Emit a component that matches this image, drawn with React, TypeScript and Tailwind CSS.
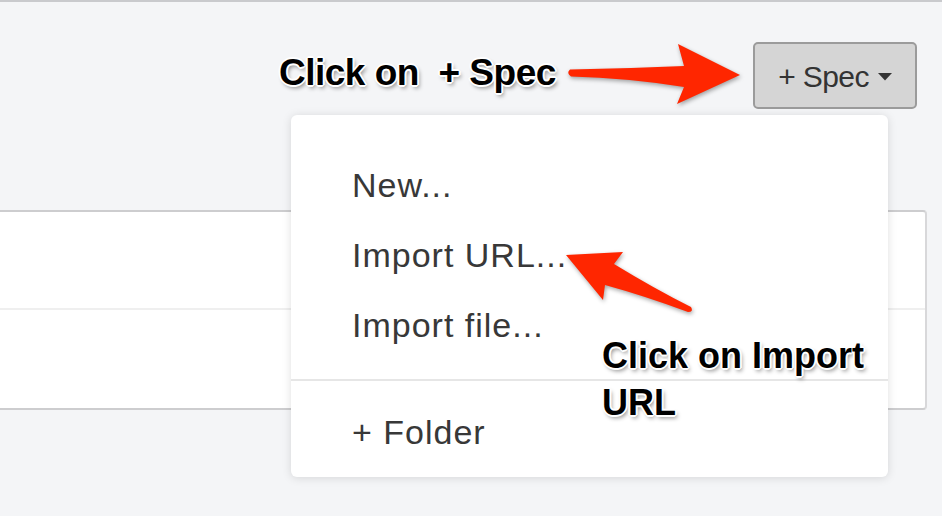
const outline =
  "[text-shadow:0_0_2px_#fff,1px_1px_0_#fff,-1px_-1px_0_#fff,1px_-1px_0_#fff,-1px_1px_0_#fff,2px_0_0_#fff,-2px_0_0_#fff,0_2px_0_#fff,0_-2px_0_#fff,2px_3px_4px_rgba(0,0,0,0.45)]";

const menuItems = ["New...", "Import URL...", "Import file..."];

const App = () => {
  return (
    <div className="relative w-[942px] h-[516px] overflow-hidden bg-[#f4f5f7] font-['Liberation_Sans',Arial,sans-serif]">
      <div className="h-[2px] bg-[#c9cacd]" />

      {/* toolbar */}
      <div className="flex justify-end pt-[40px] pr-[25px]">
        <div className="relative">
          <button className="flex items-center justify-center gap-[9px] w-[164px] h-[67px] pt-[2px] rounded-[5px] border-2 border-[#9b9b9b] bg-[#d5d5d5] text-[30px] tracking-[-0.6px] text-[#333]">
            <span>+ Spec</span>
            <svg width="14" height="8" viewBox="0 0 14 8" className="mt-[1px]">
              <path d="M0 0 H14 L7 7.5 Z" fill="#333" />
            </svg>
          </button>

          {/* dropdown */}
          <div className="absolute z-10 right-[29px] top-[calc(100%+6px)] w-[597px] rounded-[6px] bg-white shadow-[0_1px_10px_rgba(0,0,0,0.13)] pt-[35px] pb-[10px]">
            {menuItems.map((label) => (
              <div key={label} className="h-[70px] leading-[70px] pl-[61px] text-[34px] tracking-[1px] text-[#383838]">
                {label}
              </div>
            ))}
            <div className="mt-[19px] h-[2px] bg-[#e6e6e6]" />
            <div className="mt-[16px] h-[70px] leading-[70px] pl-[61px] text-[34px] tracking-[1px] text-[#383838]">
              + Folder
            </div>
          </div>
        </div>
      </div>

      {/* list behind the menu */}
      <div className="mt-[101px] mr-[15px] bg-white border-y-2 border-r-2 border-y-[#cdcdcf] border-r-[#d8d8da] rounded-r-[4px]">
        <div className="h-[98px] border-b-2 border-[#efefef]" />
        <div className="h-[98px]" />
      </div>

      {/* annotations */}
      <div className={`absolute z-20 left-[279px] top-[55px] text-[37px] leading-[36px] font-bold tracking-[-0.5px] text-black whitespace-pre ${outline}`}>
        {"Click on  + Spec"}
      </div>
      <div className={`absolute z-20 left-[602px] top-[332px] w-[300px] text-[36px] leading-[47px] font-bold tracking-[0px] text-black ${outline}`}>
        Click on Import
        <br />
        URL
      </div>

      <svg
        className="absolute inset-0 z-20 pointer-events-none drop-shadow-[1px_2px_2px_rgba(0,0,0,0.35)]"
        width="942"
        height="516"
        viewBox="0 0 942 516"
      >
        <path
          d="M570 69.5 Q628 68.5 684 66 L678 44 L740 75 L677 104 L684 87 Q628 78 571 76.5 Q566 73 570 69.5 Z"
          fill="#ff2600"
        />
        <path
          d="M566 255 L623 252 L614 264 Q655 289 691 307 Q694 312 688 312 Q645 296 605 285 L603 300 Z"
          fill="#ff2600"
        />
      </svg>
    </div>
  );
};

export default App;
